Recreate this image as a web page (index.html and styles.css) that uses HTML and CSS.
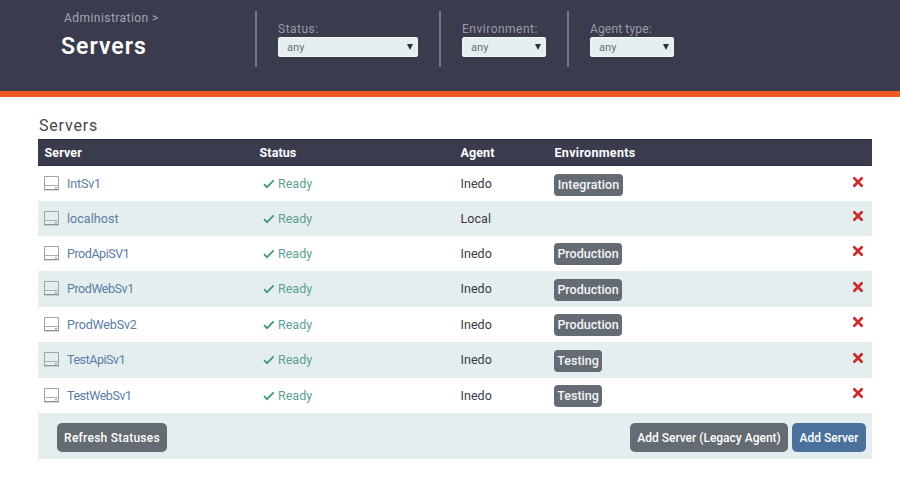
FILE: index.html
```html
<!DOCTYPE html>
<html lang="en">
<head>
<meta charset="utf-8">
<title>Servers</title>
<link rel="stylesheet" href="styles.css">
</head>
<body>
<svg width="0" height="0" class="defs">
  <symbol id="disk" viewBox="0 0 15 15"><path d="M.5.5h14v13H.5z" fill="none" stroke="#a3a3a7"/><path d="M1 9.500h13" stroke="#b0aab4"/><path d="M0 13.700h15" stroke="#919197" stroke-width="1.300"/><path d="M11 11.800h2" stroke="#77777d"/></symbol>
  <symbol id="check" viewBox="0 0 12 10"><path d="M1 5.200 4 8.200 10.700 1.400" fill="none" stroke="#3f9583" stroke-width="1.700"/></symbol>
  <symbol id="cross" viewBox="0 0 12 12"><path d="M2.300 2.300l7.400 7.400M9.700 2.300l-7.400 7.400" fill="none" stroke="#c92c2c" stroke-width="2.700" stroke-linecap="round"/></symbol>
</svg>
<header class="top">
  <div class="heading">
    <div class="crumb">Administration &gt;</div>
    <h1>Servers</h1>
  </div>
  <div class="filter status"><label>Status:</label><div class="select"><span>any</span><i></i></div></div>
  <div class="filter env"><label>Environment:</label><div class="select"><span>any</span><i></i></div></div>
  <div class="filter type"><label>Agent type:</label><div class="select"><span>any</span><i></i></div></div>
</header>
<main>
  <h2>Servers</h2>
  <div class="table">
    <div class="row head"><b>Server</b><b>Status</b><b>Agent</b><b class="wide">Environments</b></div>
    <div class="row first"><a class="name"><svg><use href="#disk"/></svg><span>IntSv1</span></a><span class="ready"><svg><use href="#check"/></svg>Ready</span><span class="agent">Inedo</span><span><em class="tag int">Integration</em></span><svg class="x"><use href="#cross"/></svg></div>
    <div class="row alt short"><a class="name loose"><svg><use href="#disk"/></svg><span>localhost</span></a><span class="ready"><svg><use href="#check"/></svg>Ready</span><span class="agent">Local</span><span></span><svg class="x"><use href="#cross"/></svg></div>
    <div class="row"><a class="name tight"><svg><use href="#disk"/></svg><span>ProdApiSV1</span></a><span class="ready"><svg><use href="#check"/></svg>Ready</span><span class="agent">Inedo</span><span><em class="tag">Production</em></span><svg class="x"><use href="#cross"/></svg></div>
    <div class="row alt"><a class="name tight"><svg><use href="#disk"/></svg><span>ProdWebSv1</span></a><span class="ready"><svg><use href="#check"/></svg>Ready</span><span class="agent">Inedo</span><span><em class="tag">Production</em></span><svg class="x"><use href="#cross"/></svg></div>
    <div class="row"><a class="name medium"><svg><use href="#disk"/></svg><span>ProdWebSv2</span></a><span class="ready"><svg><use href="#check"/></svg>Ready</span><span class="agent">Inedo</span><span><em class="tag">Production</em></span><svg class="x"><use href="#cross"/></svg></div>
    <div class="row alt"><a class="name tight"><svg><use href="#disk"/></svg><span>TestApiSv1</span></a><span class="ready"><svg><use href="#check"/></svg>Ready</span><span class="agent">Inedo</span><span><em class="tag test">Testing</em></span><svg class="x"><use href="#cross"/></svg></div>
    <div class="row"><a class="name tight"><svg><use href="#disk"/></svg><span>TestWebSv1</span></a><span class="ready"><svg><use href="#check"/></svg>Ready</span><span class="agent">Inedo</span><span><em class="tag test">Testing</em></span><svg class="x"><use href="#cross"/></svg></div>
    <div class="actions"><button class="refresh">Refresh Statuses</button><button class="legacy">Add Server (Legacy Agent)</button><button class="add">Add Server</button></div>
  </div>
</main>
</body>
</html>
```
FILE: styles.css
```css
* { box-sizing: border-box; }
body { margin: 0; background: #fff; font: 12.5px/16px Roboto, "Liberation Sans", sans-serif; color: #3a3a44; }
.defs { display: block; height: 0; }
.top { display: flex; height: 97px; padding-top: 11px; background: #3a3b4d; border-bottom: 6px solid #f15a24; }
.heading { width: 255px; padding-left: 61px; }
.crumb { padding-left: 3px; height: 16px; line-height: 15px; font-size: 12px; letter-spacing: .45px; color: #a1a5b2; }
h1 { margin: 6px 0 0; font-size: 23px; line-height: 28px; font-weight: 600; letter-spacing: 1px; color: #fff; }
.filter { height: 56px; padding: 9px 0 0 21px; border-left: 2px solid #737789; }
.status { width: 184px; }
.env { width: 128px; }
.type { width: 110px; }
label { display: block; height: 17px; line-height: 18px; font-size: 12px; letter-spacing: .5px; color: #989daa; white-space: nowrap; }
.type label { letter-spacing: .15px; }
.select { display: flex; align-items: center; justify-content: space-between; height: 20px; width: 84px; padding: 0 4px 0 8px; background: #e5eeef; border: 1px solid #f4f8f8; border-radius: 2px; font-size: 11px; letter-spacing: .1px; color: #6c7077; }
.select span { padding-top: 2px; }
.status .select { width: 140px; }
.select i { border: 3px solid transparent; border-top: 6px solid #2c2e37; border-bottom: 0; }
main { width: 834px; margin: 18px 0 0 38px; }
h2 { margin: 0; height: 24px; padding-left: 1px; line-height: 21px; font-size: 16px; font-weight: 400; letter-spacing: .8px; color: #474747; }
.row { display: grid; grid-template-columns: 221px 201px 95px 1fr 20px; align-items: center; height: 35.5px; }
.row.first { height: 35px; }
.row.short { height: 34.5px; }
.alt, .actions { background: #e5eeef; }
.head { height: 27px; padding-left: 6.500px; grid-template-columns: 215px 201px 94px 1fr; background: #3a3b4d; color: #fff; border: solid #2b304a; border-width: 1px 0; }
.head b { font-weight: 700; letter-spacing: .1px; }
.head .wide { letter-spacing: .3px; }
.name, .ready, .agent { padding-top: .8px; }
.name { display: flex; align-items: center; gap: 8px; padding-left: 6px; color: #597da5; letter-spacing: -.15px; }
.name.loose { letter-spacing: .05px; }
.name.tight { letter-spacing: -.45px; }
.name.medium { letter-spacing: -.15px; }
.name svg { width: 15px; height: 15px; margin-top: -1px; }
.ready { display: flex; align-items: center; gap: 3px; padding-left: 4px; color: #5da092; }
.ready svg { width: 12px; height: 10px; }
.agent { padding-left: .500px; letter-spacing: .05px; }
.tag { display: block; width: 68px; height: 22px; margin-top: 2px; border-radius: 4px; margin-left: -1px; background: #646b72; color: #f3f5f6; font-style: normal; font-weight: 500; line-height: 22px; text-align: center; }
.int { width: 69px; letter-spacing: .08px; }
.test { width: 48px; }
.x { width: 12px; height: 12px; margin-top: -4px; }
.actions { display: flex; align-items: center; height: 45.5px; padding: 3px 6px 0 19px; gap: 4px; }
button { height: 29px; padding: 1px 0 0; border: 0; border-radius: 5px; background: #646b72; color: #fff; font: 500 12px Roboto, sans-serif; white-space: nowrap; box-shadow: 0 0 0 1px #eaebf0; }
.refresh { width: 110px; margin-right: auto; letter-spacing: .25px; }
.legacy { width: 158px; }
.add { width: 74px; background: #49719b; }
```
